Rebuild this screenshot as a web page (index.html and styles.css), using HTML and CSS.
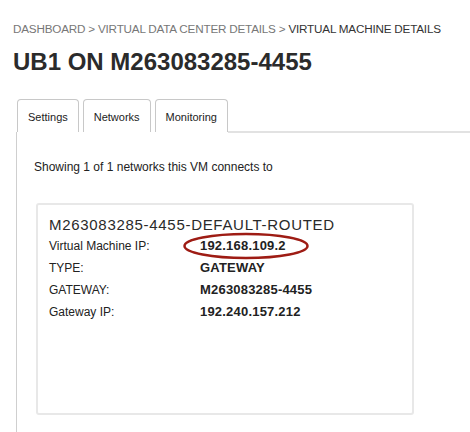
FILE: index.html
```html
<!DOCTYPE html>
<html>
<head>
<meta charset="utf-8">
<link rel="stylesheet" href="styles.css">
</head>
<body>
<div class="page">
  <nav class="crumbs"><span class="crumb">DASHBOARD</span> &gt; <span class="crumb">VIRTUAL DATA CENTER DETAILS</span> &gt; <span class="crumb-current">VIRTUAL MACHINE DETAILS</span></nav>
  <h1 class="title">UB1 ON M263083285-4455</h1>
  <div class="tabs">
    <div class="tab">Settings</div>
    <div class="tab active">Networks</div>
    <div class="tab">Monitoring</div>
    <div class="tab-rest"></div>
  </div>
  <div class="panel">
    <p class="summary">Showing 1 of 1 networks this VM connects to</p>
    <div class="card">
      <div class="card-title">M263083285-4455-DEFAULT-ROUTED</div>
      <div class="rows">
        <div class="label">Virtual Machine IP:</div>
        <div class="value"><span class="circled">192.168.109.2<svg class="ring" viewBox="0 0 126 28" width="126" height="28"><ellipse cx="63" cy="14" rx="61.5" ry="12" fill="none" stroke="#9e1c14" stroke-width="2.5"/></svg></span></div>
        <div class="label">TYPE:</div>
        <div class="value">GATEWAY</div>
        <div class="label">GATEWAY:</div>
        <div class="value">M263083285-4455</div>
        <div class="label">Gateway IP:</div>
        <div class="value">192.240.157.212</div>
      </div>
    </div>
  </div>
</div>
</body>
</html>
```
FILE: styles.css
```css
html, body {
  margin: 0;
  padding: 0;
  background: #fff;
  overflow: hidden;
}
.page {
  padding: 22px 0 0 13px;
  font-family: "Liberation Sans", Arial, sans-serif;
  color: #333;
}
.crumbs {
  font-size: 11.7px;
  color: #777;
  line-height: 14px;
  white-space: nowrap;
  letter-spacing: -0.2px;
}
.crumb-current {
  color: #333;
}
.title {
  margin: 13px 0 0 0;
  font-size: 24px;
  line-height: 26px;
  font-weight: bold;
  color: #2b2b2b;
}
.tabs {
  display: flex;
  align-items: flex-end;
  margin-top: 24px;
  margin-left: 4px;
  gap: 4px;
}
.tab {
  height: 33px;
  box-sizing: border-box;
  border: 1px solid #c8c8c8;
  border-bottom: none;
  border-radius: 4px 4px 0 0;
  padding: 1px 10px 0;
  font-size: 11px;
  line-height: 32px;
  color: #222;
  background: #fff;
}
.tab-rest {
  flex: 1;
  border-bottom: 2px solid #e2e2e2;
  margin-left: -4px;
  margin-bottom: -1px;
}
.panel {
  margin-left: 3px;
  border-left: 1px solid #cfcfcf;
  padding: 28px 0 0 17px;
  height: 272px;
}
.summary {
  margin: 0;
  font-size: 12px;
  line-height: 14px;
  color: #222;
}
.card {
  margin-top: 29px;
  margin-left: 2px;
  width: 378px;
  height: 212px;
  box-sizing: border-box;
  border: 2px solid #e8e8e8;
  border-radius: 3px;
  padding: 11px 0 0 11px;
}
.card-title {
  font-size: 15px;
  line-height: 17px;
  color: #2a2a2a;
  letter-spacing: 0.7px;
}
.rows {
  display: grid;
  grid-template-columns: 151px auto;
  grid-auto-rows: 22px;
  margin-top: 2px;
  font-size: 12px;
  line-height: 22px;
  color: #222;
}
.value {
  font-weight: bold;
  font-size: 13px;
  letter-spacing: 0.2px;
}
.circled {
  position: relative;
}
.ring {
  position: absolute;
  left: -17px;
  top: -6px;
}
```
